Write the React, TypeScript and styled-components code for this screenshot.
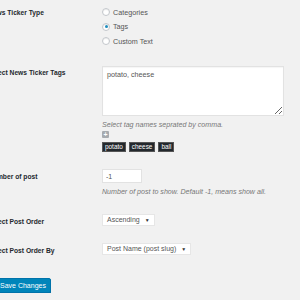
import React from 'react';
import styled, { createGlobalStyle } from 'styled-components';

const GlobalStyle = createGlobalStyle`
  html, body {
    margin: 0;
    padding: 0;
    background: #f1f1f1;
    overflow: hidden;
  }
  body {
    font-family: "Liberation Sans", Arial, sans-serif;
    color: #444;
  }
`;

const Page = styled.div`
  margin: -3.5px 0 0 -12px;
  width: 312px;
`;

const Row = styled.div`
  display: grid;
  grid-template-columns: 114px 1fr;
`;

const Label = styled.div`
  padding-top: 11px;
  font-size: 6.7px;
  line-height: 9px;
  font-weight: 700;
  color: #23282d;
  white-space: nowrap;
`;

const Field = styled.div`
  padding: 8.5px 0;
  display: flex;
  flex-direction: column;
  align-items: flex-start;
`;

const RadioLine = styled.label`
  display: flex;
  align-items: center;
  height: 14.5px;
  font-size: 7.2px;
  color: #555;
  gap: 3px;
`;

const Radio = styled.span<{ $checked?: boolean }>`
  width: 8px;
  height: 8px;
  box-sizing: border-box;
  border-radius: 50%;
  border: 1px solid #c3c7cb;
  background: #fff;
  box-shadow: inset 0 1px 1px rgba(0, 0, 0, 0.08);
  display: flex;
  align-items: center;
  justify-content: center;
  &::after {
    content: '';
    display: ${(p) => (p.$checked ? 'block' : 'none')};
    width: 3px;
    height: 3px;
    border-radius: 50%;
    background: #1e8cbe;
  }
`;

const TextArea = styled.textarea`
  width: 182px;
  height: 50px;
  box-sizing: border-box;
  margin: 0;
  padding: 3px 4px;
  border: 1px solid #e2e2e2;
  box-shadow: inset 0 1px 1px rgba(0, 0, 0, 0.04);
  background: #fff;
  font-family: "Liberation Sans", Arial, sans-serif;
  font-size: 7.2px;
  line-height: 9px;
  color: #555;
  -webkit-text-fill-color: #555;
  outline: none;
`;

const Description = styled.p<{ $gap?: number }>`
  margin: ${(p) => p.$gap ?? 5}px 0 0;
  font-size: 7.1px;
  line-height: 9px;
  font-style: italic;
  color: #777;
  white-space: nowrap;
`;

const AddButton = styled.span`
  margin-top: 1.5px;
  width: 7px;
  height: 7px;
  background: #a7abaf;
  border-radius: 1px;
  color: #fff;
  font-size: 7px;
  line-height: 7px;
  font-weight: 700;
  text-align: center;
`;

const TagList = styled.div`
  margin-top: 4px;
  display: flex;
  gap: 3px;
`;

const Tag = styled.span`
  height: 10px;
  padding: 0 2px;
  background: #23282d;
  border: 1px solid #555;
  box-sizing: border-box;
  color: #fff;
  font-size: 6.4px;
  line-height: 8px;
`;

const NumberInput = styled.input`
  width: 40px;
  height: 14px;
  box-sizing: border-box;
  margin: 0;
  padding: 0 3px;
  border: 1px solid #e2e2e2;
  background: #fff;
  font-family: "Liberation Sans", Arial, sans-serif;
  font-size: 7px;
  color: #555;
  outline: none;
`;

const SelectBox = styled.div`
  position: relative;
  height: 12px;
  box-sizing: border-box;
  padding: 0 14px 0 4px;
  border: 1px solid #e6e6e6;
  background: #fff;
  font-size: 7px;
  line-height: 10px;
  color: #555;
  white-space: nowrap;
  &::after {
    content: '▼';
    position: absolute;
    right: 4px;
    top: 0;
    font-size: 5px;
    line-height: 10px;
    color: #333;
  }
`;

const Submit = styled.div`
  padding: 10px 0 0 7px;
`;

const SaveButton = styled.button`
  height: 15px;
  padding: 0 4px;
  border: 1px solid #0073aa;
  border-radius: 2px;
  background: #0085ba;
  box-shadow: 0 1px 0 #006799;
  color: #fff;
  font-family: "Liberation Sans", Arial, sans-serif;
  font-size: 7px;
  cursor: pointer;
`;

const tags = ['potato', 'cheese', 'ball'];

export default function App() {
  return (
    <>
      <GlobalStyle />
      <Page>
        <Row>
          <Label>News Ticker Type</Label>
          <Field>
            <RadioLine><Radio />Categories</RadioLine>
            <RadioLine><Radio $checked />Tags</RadioLine>
            <RadioLine><Radio />Custom Text</RadioLine>
          </Field>
        </Row>
        <Row>
          <Label>Select News Ticker Tags</Label>
          <Field>
            <TextArea defaultValue="potato, cheese" />
            <Description>Select tag names seprated by comma.</Description>
            <AddButton>+</AddButton>
            <TagList>
              {tags.map((t) => (
                <Tag key={t}>{t}</Tag>
              ))}
            </TagList>
          </Field>
        </Row>
        <Row>
          <Label>Number of post</Label>
          <Field>
            <NumberInput defaultValue="-1" />
            <Description>Number of post to show. Default -1, means show all.</Description>
          </Field>
        </Row>
        <Row>
          <Label>Select Post Order</Label>
          <Field>
            <SelectBox>Ascending</SelectBox>
          </Field>
        </Row>
        <Row>
          <Label>Select Post Order By</Label>
          <Field>
            <SelectBox>Post Name (post slug)</SelectBox>
          </Field>
        </Row>
        <Submit>
          <SaveButton>Save Changes</SaveButton>
        </Submit>
      </Page>
    </>
  );
}
